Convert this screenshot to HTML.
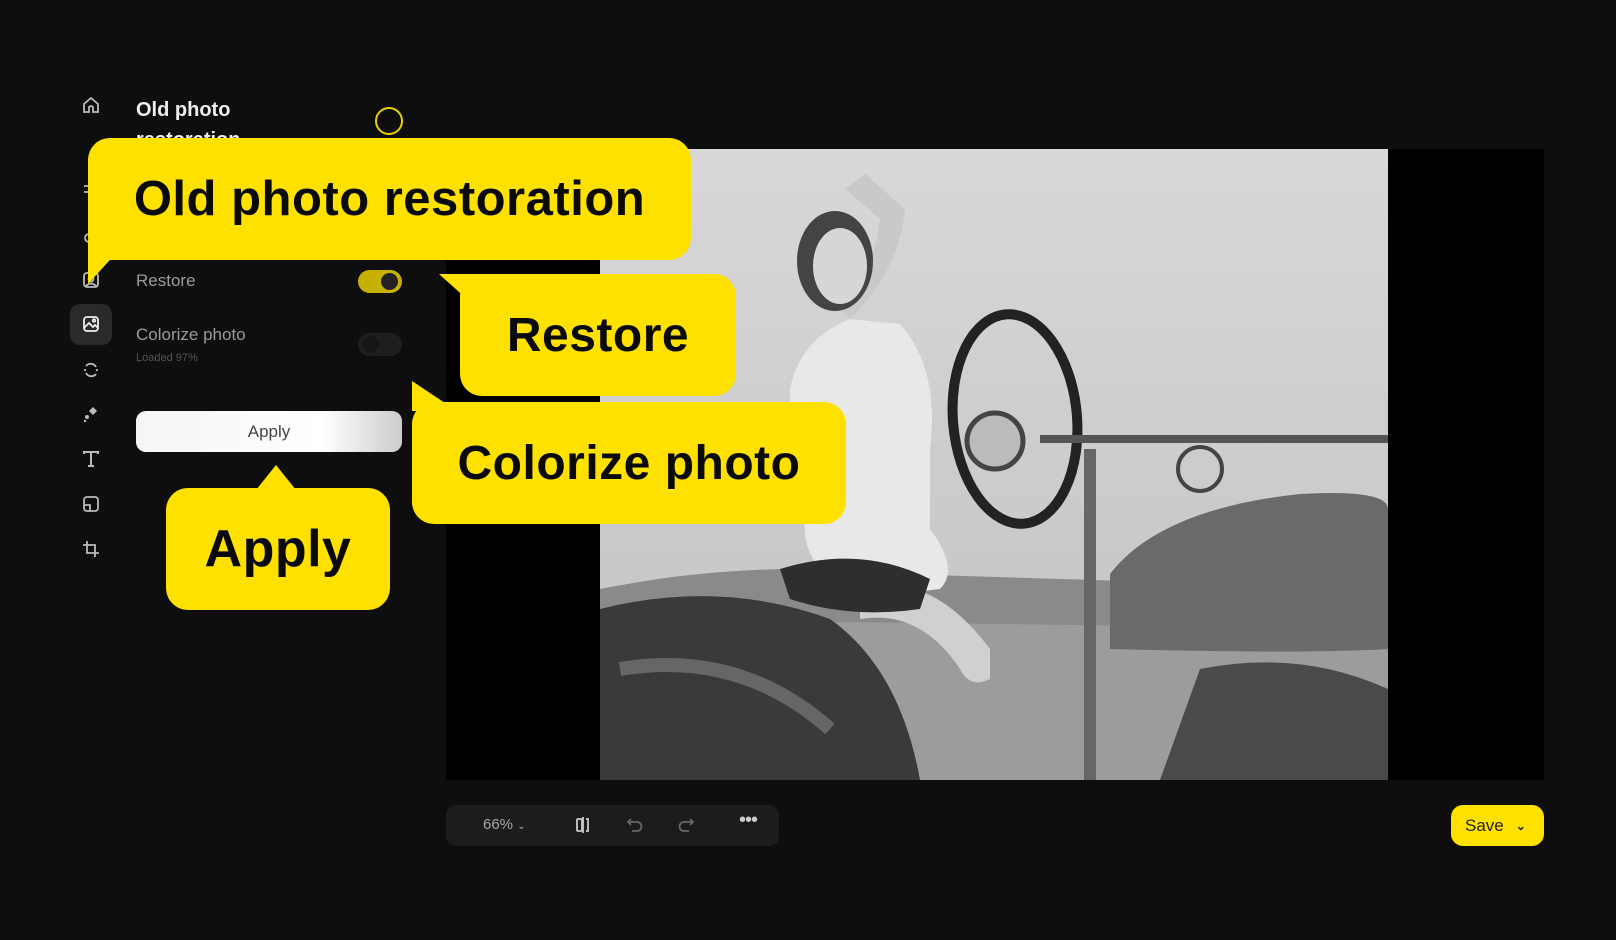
<!DOCTYPE html>
<html><head><meta charset="utf-8"><style>
*{margin:0;padding:0;box-sizing:border-box}
body{width:1616px;height:940px;background:#0e0e0e;position:relative;overflow:hidden;font-family:"Liberation Sans",sans-serif}
.a{position:absolute}
.ic{position:absolute;left:81px;width:20px;height:20px}
.bub{position:absolute;background:#ffe100;border-radius:22px;color:#0a0a0a;font-weight:bold;display:flex;align-items:center;justify-content:center;letter-spacing:0.5px}
.tog{position:absolute;width:44px;height:23px;border-radius:12px}
</style></head><body>
<!-- sidebar icons -->
<svg class="ic" style="top:95px" viewBox="0 0 20 20" fill="none" stroke="#bbb" stroke-width="1.8"><path d="M3 9 L10 3 L17 9 V17 H12 V12 Q10 10 8 12 V17 H3Z"/></svg>
<svg class="ic" style="top:180px" viewBox="0 0 20 20" fill="none" stroke="#bbb" stroke-width="1.8"><path d="M3 6 H15 M3 12 H15"/></svg>
<svg class="ic" style="top:228px" viewBox="0 0 20 20" fill="none" stroke="#bbb" stroke-width="1.8"><circle cx="8" cy="10" r="4"/></svg>
<svg class="ic" style="top:270px" viewBox="0 0 20 20" fill="none" stroke="#bbb" stroke-width="1.8"><rect x="3" y="3" width="14" height="14" rx="3"/><circle cx="10" cy="9" r="2.5"/><path d="M5 16 Q10 11 15 16"/></svg>
<div class="a" style="left:70px;top:304px;width:42px;height:41px;border-radius:10px;background:#2a2a2a"></div>
<svg class="ic" style="top:314px" viewBox="0 0 20 20" fill="none" stroke="#eee" stroke-width="1.8"><rect x="3" y="3" width="14" height="14" rx="3"/><path d="M3 14 L8 9 L12 13 L14 11 L17 14"/><circle cx="13" cy="6.5" r="1.3"/></svg>
<svg class="ic" style="top:360px" viewBox="0 0 20 20" fill="none" stroke="#bbb" stroke-width="1.8"><path d="M15 7 A6 6 0 0 0 5 6"/><path d="M5 13 A6 6 0 0 0 15 14"/><path d="M4 9 V11 M16 9 V11"/></svg>
<svg class="ic" style="top:404px" viewBox="0 0 20 20" fill="#bbb"><path d="M12 3 L16 7 L12 11 L8 7Z"/><circle cx="6" cy="13" r="2"/><circle cx="4" cy="17" r="1.2"/></svg>
<svg class="ic" style="top:449px" viewBox="0 0 20 20" fill="none" stroke="#bbb" stroke-width="2"><path d="M3 5 V3 H17 V5 M10 3 V17 M7 17 H13"/></svg>
<svg class="ic" style="top:494px" viewBox="0 0 20 20" fill="none" stroke="#bbb" stroke-width="1.8"><rect x="3" y="3" width="14" height="14" rx="3"/><path d="M3 11 H9 V17"/></svg>
<svg class="ic" style="top:539px" viewBox="0 0 20 20" fill="none" stroke="#bbb" stroke-width="1.8"><path d="M6 2 V14 H18 M2 6 H14 V18"/></svg>

<div class="a" style="left:136px;top:95px;color:#eee;font-weight:bold;font-size:20px;line-height:30px">Old photo<br>restoration</div>
<div class="a" style="left:375px;top:107px;width:28px;height:28px;border:2px solid #e8d000;border-radius:50%"></div>

<div class="a" style="left:136px;top:271px;color:#9a9a9a;font-size:17px">Restore</div>
<div class="tog" style="left:358px;top:270px;background:#c6b000"><div class="a" style="right:4px;top:3px;width:17px;height:17px;border-radius:50%;background:#222"></div></div>
<div class="a" style="left:136px;top:325px;color:#9a9a9a;font-size:17px">Colorize photo</div>
<div class="a" style="left:136px;top:352px;color:#555;font-size:11px">Loaded 97%</div>
<div class="tog" style="left:358px;top:333px;background:#1e1e1e"><div class="a" style="left:4px;top:3px;width:17px;height:17px;border-radius:50%;background:#161616"></div></div>
<div class="a" style="left:136px;top:411px;width:266px;height:41px;border-radius:10px;background:linear-gradient(90deg,#f5f5f5,#fff 70%,#ccc);color:#444;font-size:17px;display:flex;align-items:center;justify-content:center">Apply</div>

<!-- canvas -->
<div class="a" style="left:446px;top:149px;width:1098px;height:631px;background:#000"></div>
<svg class="a" style="left:600px;top:149px" width="788" height="631" viewBox="0 0 788 631">
<defs><linearGradient id="sky" x1="0" y1="0" x2="0" y2="1"><stop offset="0" stop-color="#d8d8d8"/><stop offset=".7" stop-color="#c8c8c8"/><stop offset="1" stop-color="#aaa"/></linearGradient></defs>
<rect width="788" height="631" fill="url(#sky)"/>
<path d="M0 440 Q150 410 300 425 L788 440 V631 H0Z" fill="#8a8a8a"/>
<path d="M0 470 L788 480 V631 H0Z" fill="#9c9c9c"/>
<path d="M0 460 Q120 430 230 470 Q300 520 320 631 H0Z" fill="#3a3a3a"/>
<path d="M20 520 Q140 500 230 580" stroke="#666" stroke-width="14" fill="none"/>
<path d="M510 425 Q560 360 700 345 Q788 340 788 360 V500 Q700 505 510 500Z" fill="#6a6a6a"/>
<path d="M250 170 Q300 120 305 60 L265 25 L245 40 L280 70 Q275 120 240 160Z" fill="#c9c9c9"/>
<path d="M190 240 Q200 190 250 170 L300 175 Q340 220 330 300 L330 380 Q360 420 340 440 L260 450 Q200 420 205 370 L190 280Z" fill="#e8e8e8"/>
<ellipse cx="235" cy="112" rx="38" ry="50" fill="#444"/>
<ellipse cx="240" cy="117" rx="27" ry="38" fill="#d6d6d6"/>
<ellipse cx="415" cy="270" rx="62" ry="105" fill="none" stroke="#222" stroke-width="10" transform="rotate(-5 415 270)"/>
<path d="M440 290 H788" stroke="#555" stroke-width="8"/>
<path d="M490 300 V631" stroke="#666" stroke-width="12"/>
<circle cx="395" cy="292" r="28" fill="#bbb" stroke="#444" stroke-width="5"/>
<circle cx="600" cy="320" r="22" fill="#ccc" stroke="#444" stroke-width="4"/>
<path d="M260 440 Q330 420 390 500 L390 530 Q370 540 360 520 Q320 460 260 470Z" fill="#d0d0d0"/>
<path d="M180 420 Q260 395 330 430 L320 460 Q250 470 190 450Z" fill="#2e2e2e"/>
<path d="M600 520 Q700 500 788 540 V631 H560Z" fill="#4a4a4a"/>
</svg>

<!-- toolbar -->
<div class="a" style="left:446px;top:805px;width:333px;height:41px;border-radius:10px;background:#1c1c1c;color:#aaa;font-size:15px">
<span class="a" style="left:37px;top:11px">66% <span style="font-size:10px">&#8964;</span></span>
<svg class="a" style="left:128px;top:11px" width="18" height="18" viewBox="0 0 18 18" fill="none" stroke="#ccc" stroke-width="1.8"><rect x="3" y="3" width="5" height="12" rx="1"/><path d="M12 3 H14 V15 H12 M9 1 V17"/></svg>
<svg class="a" style="left:180px;top:11px" width="18" height="18" viewBox="0 0 18 18" fill="none" stroke="#666" stroke-width="1.8"><path d="M5 3 L2 6 L5 9 M2 6 H11 A4 4 0 0 1 11 15 H6"/></svg>
<svg class="a" style="left:231px;top:11px" width="18" height="18" viewBox="0 0 18 18" fill="none" stroke="#666" stroke-width="1.8"><path d="M13 3 L16 6 L13 9 M16 6 H7 A4 4 0 0 0 7 15 H12"/></svg>
<span class="a" style="left:293px;top:4px;font-size:20px;color:#ccc;letter-spacing:-1px">&#8226;&#8226;&#8226;</span>
</div>
<div class="a" style="left:1451px;top:805px;width:93px;height:41px;border-radius:12px;background:#ffe100;color:#222;font-size:17px;display:flex;align-items:center;padding-left:14px">Save <span style="margin-left:12px;font-size:12px;font-weight:bold">&#8964;</span></div>

<!-- bubbles -->
<svg class="a" style="left:88px;top:240px" width="40" height="45"><path d="M0 0 H40 L0 44Z" fill="#ffe100"/></svg>
<div class="bub" style="left:88px;top:138px;width:603px;height:122px;font-size:49px">Old photo restoration</div>
<svg class="a" style="left:439px;top:274px" width="50" height="50"><path d="M0 0 H50 V45Z" fill="#ffe100"/></svg>
<div class="bub" style="left:460px;top:274px;width:276px;height:122px;font-size:48px">Restore</div>
<svg class="a" style="left:412px;top:381px" width="50" height="50"><path d="M0 0 L45 30 H0Z" fill="#ffe100"/></svg>
<div class="bub" style="left:412px;top:402px;width:434px;height:122px;font-size:48px">Colorize photo</div>
<svg class="a" style="left:256px;top:465px" width="40" height="25"><path d="M0 25 L20 0 L40 25Z" fill="#ffe100"/></svg>
<div class="bub" style="left:166px;top:488px;width:224px;height:122px;font-size:52px">Apply</div>
</body></html>
